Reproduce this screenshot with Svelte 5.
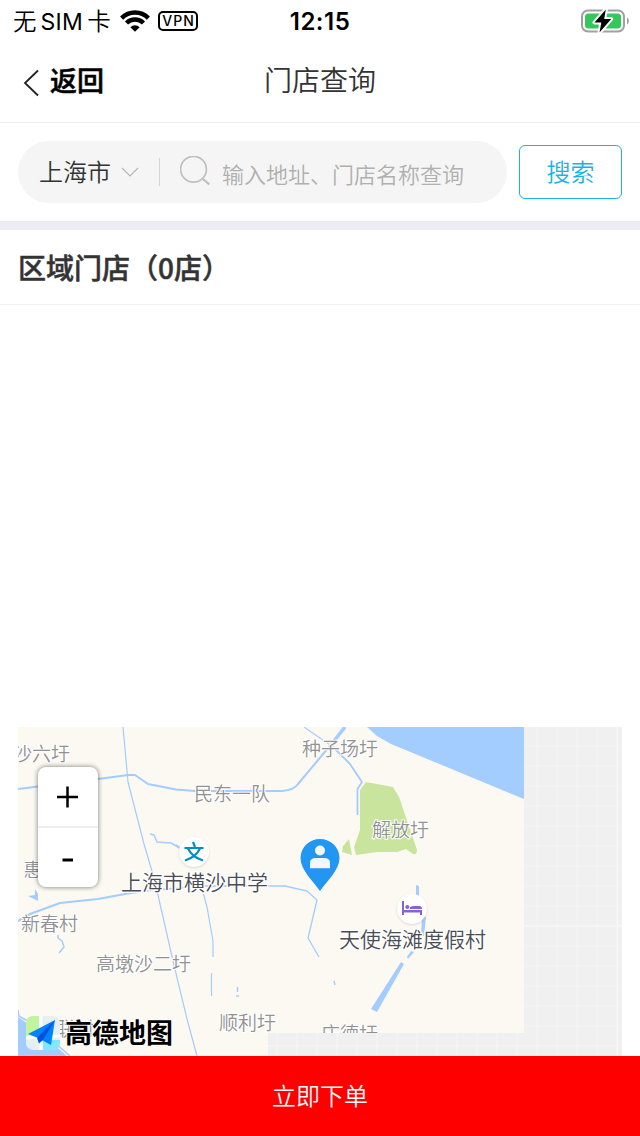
<script>
  const villages = [
    { name: '沙六圩', x: 13, y: 760.5 },
    { name: '种子场圩', x: 302, y: 755.5 },
    { name: '民东一队', x: 194, y: 800.5 },
    { name: '解放圩', x: 372, y: 836.5 },
    { name: '惠', x: 23.5, y: 876.5 },
    { name: '新春村', x: 21, y: 930.5 },
    { name: '高墩沙二圩', x: 96, y: 970.5 },
    { name: '顺利圩', x: 219, y: 1029.5 },
    { name: '庄德圩', x: 321, y: 1040.5 },
    { name: '联村', x: 56, y: 1035.5 },
  ];
  const gridColumns = Array.from({ length: 18 }, (_, i) => 277 + i * 20);
  const gridRows = Array.from({ length: 16 }, (_, i) => 746 + i * 20);
</script>

<div class="screen">
  <div class="status">
    <div class="carrier">
      <span class="sim"><span>无</span><span class="latin">SIM</span><span>卡</span></span>
      <svg class="wifi" width="30" height="22" viewBox="0 0 30 22">
        <g fill="none" stroke="#000" stroke-width="4.4">
          <path d="M1.6 8.1a19 19 0 0 1 26.8 0" />
          <path d="M6.5 13a12.1 12.1 0 0 1 17 0" />
        </g>
        <path d="M15 21.800l-4.600-4.600a6.600 6.600 0 0 1 9.200 0z" />
      </svg>
      <span class="vpn">VPN</span>
    </div>
    <time>12:15</time>
    <svg class="battery" width="48" height="24" viewBox="0 0 48 24">
      <rect x="1" y="1.5" width="42" height="21" rx="6" fill="none" stroke="#a0a0a2" stroke-width="2" />
      <path d="M46 8.5c2.500 1.200 2.500 5.800 0 7z" fill="#a0a0a2" />
      <rect x="4" y="4.500" width="36" height="15" rx="3.500" fill="#34c759" />
      <path d="M24.800.5L13.500 13.500h6.800L18.500 23.500 30.200 10h-7z" fill="#000" stroke="#fff" stroke-width="4" paint-order="stroke" stroke-linejoin="round" />
    </svg>
  </div>

  <header>
    <button class="back">
      <svg width="18" height="28" viewBox="0 0 18 28"><path d="M16 1.500L3 14 16 26.500" fill="none" stroke="#222" stroke-width="1.800" /></svg>
      <span>返回</span>
    </button>
    <h1>门店查询</h1>
  </header>

  <section class="search">
    <div class="field">
      <span class="city">上海市</span>
      <svg class="chevron" width="18" height="10" viewBox="0 0 18 10"><path d="M1 1l8 8 8-8" fill="none" stroke="#b5b5b5" stroke-width="1.100" /></svg>
      <i></i>
      <svg class="lens" width="32" height="32" viewBox="0 0 32 32"><g fill="none" stroke="#bfbfbf" stroke-width="1.700"><circle cx="13.500" cy="13.300" r="12.900" /><path d="M22.300 22.500l7 5.900" stroke-width="2.200" /></g></svg>
      <span class="hint">输入地址、门店名称查询</span>
    </div>
    <button class="go">搜索</button>
  </section>

  <h2>区域门店（0店）</h2>
  <main></main>

  <div class="map">
    <svg width="604" height="329" viewBox="18 727 604 329">
      <rect x="18" y="727" width="604" height="329" fill="#f0f0f0" />
      <g fill="none" stroke="#f3f3f3" stroke-width="1.600">
        {#each gridColumns as x}<path d="M{x} 727V1056" />{/each}
        {#each gridRows as y}<path d="M268 {y}H622" />{/each}
      </g>
      <path d="M417.500 727V1056M617.500 727V1056M268 926H622" stroke="#f6f6f6" stroke-width="2" />
      <path d="M18 727H524V1033H268V1056H18Z" fill="#fcf9f2" />

      <g fill="#a3ccff">
        <path d="M367 727H524V799L391 744 377 736Z" />
        <path d="M18 1017L37 1030 67 1056H18Z" />
        <path d="M28 896l7-1V889l3 5v6l1 1-3-1z" />
        <path d="M401 962l3 2-27 48-6-3z" />
        <path d="M416 885l3 1v10h-3zM422 916l4 1-2 19-3 0zM411 951l3 1-6 7-1-2z" />
      </g>
      <g fill="#c9e59d">
        <path d="M366 782l27 5 6 10 18 53q0 5-4 4l-7-5-9 3h-20l-21 3-2-8 6-17V790z" />
        <path d="M349 839l3 16-10-3 1-6z" />
      </g>
      <g fill="none" stroke="#a3ccff" stroke-linejoin="round">
        <path stroke-width="2" d="M18 789L98 779 128 775H135L148 784 176 789.500 195 791H282Q294 790 298 784L334 741" />
        <path stroke-width="3.500" d="M334 741L345 727" />
        <path stroke-width="1.200" d="M123 727L128 782 144 844 154 878 158 895 173 961 187 1019 197 1056" />
        <path stroke-width="1.500" d="M150 834l4 1 3 7 14 1 9 5" />
        <path stroke-width="2" d="M176 845l5 4" />
        <path stroke-width="2.200" d="M18 921L30 914 60 903 98 899 125 894 145 891" />
        <path stroke-width="1.300" d="M145 891L200 886H285L307 891 317 900 308 938 319 957" />
        <path stroke-width="1.200" d="M201 885L207 907 213 941V957M211.500 973V996" />
        <path stroke-width="1.100" d="M304 727L333 747" />
        <path stroke-width="1.800" d="M333 747L350 764 362 782 357.500 789V815" />
        <path stroke-width="1.500" d="M58 935v3l4 3 2 6-5 6M237.500 987v5M236 996h3M334 981l1 4" />
        <path stroke-width="1.500" d="M18 1010l1 6 17 10 34 30" />
      </g>

      <g class="village">
        {#each villages as v}<text x={v.x} y={v.y}>{v.name}</text>{/each}
      </g>
      <path d="M268 1033H524V1056H268Z" fill="#f0f0f0" />
      <path d="M277 1033v23M297 1033v23M317 1033v23M337 1033v23M357 1033v23M377 1033v23M397 1033v23M417 1033v23M437 1033v23M457 1033v23M477 1033v23M497 1033v23M517 1033v23M268 1046H524" stroke="#f4f4f4" stroke-width="1.600" />

      <g class="poi">
        <circle cx="194" cy="852" r="15" />
        <circle cx="412" cy="909" r="15" />
      </g>
      <path d="M193 842l2 5M184.500 848h19M188 848.500q4 8.500 15 12M200 848.500q-4 8.500-15 12" fill="none" stroke="#0090c8" stroke-width="2.200" />
      <path d="M402 901h2v9h18v5h-2v-2.500h-16v2.500h-2zM410 909v-2l3-1h6q3 0 3 3z" fill="#8761db" />
      <circle cx="407.300" cy="907" r="2.100" fill="#8761db" />
      <g class="place">
        <text x="121" y="890">上海市横沙中学</text>
        <text x="339" y="947">天使海滩度假村</text>
      </g>

      <path d="M320 891C313 881 300.500 870 300.500 858A19.500 19 0 0 1 339.500 858C339.500 870 327 881 320 891Z" fill="#2196f3" />
      <circle cx="320" cy="850.500" r="5" fill="#f3f7fc" />
      <path d="M310 868.300V863q0-5 6-5h8q6 0 6 5v5.300z" fill="#f3f7fc" />

      <clipPath id="badge"><rect x="26" y="1016" width="34" height="34" rx="7" /></clipPath>
      <g clip-path="url(#badge)">
        <path d="M26 1016H60V1050H26Z" fill="#e6f0f2" />
        <path d="M26 1016H39V1031L26 1036Z" fill="#c2f49c" />
        <path d="M43 1040H60V1050H43Z" fill="#83e5ff" />
        <path d="M41 1016V1050M26 1038L60 1036" stroke="#fff" stroke-width="3" />
      </g>
      <path d="M55 1020L28 1034 38 1038 51 1045Z" fill="#0083ff" />
      <path d="M55 1020L37 1038 39 1043.500 43 1040Z" fill="#0052d9" />
      <text class="brand" x="65" y="1043" textLength="108" lengthAdjust="spacing">高德地图</text>
    </svg>
    <div class="zoom">
      <button aria-label="+"><svg width="22" height="22" viewBox="0 0 22 22"><path d="M10.500.5v21M0 11h21" stroke="#000" stroke-width="2.500" /></svg></button>
      <button aria-label="-"><svg width="22" height="22" viewBox="0 0 22 22"><path d="M5.500 13h10.500" stroke="#000" stroke-width="3" /></svg></button>
    </div>
  </div>
  <button class="order">立即下单</button>
</div>

<style>
  :global(body) { margin: 0; background: #fff; }
  .screen {
    width: 640px; height: 1136px; overflow: hidden; display: flex; flex-direction: column;
    background: #fff; color: #333; font-family: "Noto Sans CJK SC", sans-serif;
  }
  button { border: 0; padding: 0; margin: 0; background: none; font: inherit; color: inherit; }
  svg { display: block; flex: none; }
  h1, h2 { margin: 0; }
  .status { height: 40px; display: grid; grid-template-columns: 1fr auto 1fr; align-items: center; color: #000; flex: none; }
  .carrier { display: flex; align-items: center; padding-left: 13px; }
  .sim { display: flex; align-items: center; gap: 4px; font: 350 23.500px/40px Inter, "Noto Sans CJK SC", sans-serif; width: 107px; padding-top: 2px; }
  .latin { font-weight: 400; font-size: 23px; letter-spacing: .3px; }
  .vpn { margin-left: 8px; box-sizing: border-box; width: 40px; height: 20px; border: 2px solid #000; border-radius: 5px; font: 500 14px/16px Inter, sans-serif; letter-spacing: 1px; text-align: center; padding-left: 1px; }
  time { font: 600 24px/40px Inter, sans-serif; letter-spacing: .5px; padding-top: 2px; }
  .battery { justify-self: end; margin-right: 11px; }
  header { height: 82px; border-bottom: 1px solid #efefef; display: grid; grid-template-columns: 1fr auto 1fr; align-items: center; flex: none; }
  .back { display: flex; align-items: center; padding-left: 22px; gap: 10px; font-weight: 500; font-size: 27px; line-height: 40px; color: #000; -webkit-text-stroke: .5px #000; }
  .back svg { margin-top: 3px; }
  .back span { margin-top: -2px; }
  h1 { font-weight: 350; font-size: 28px; line-height: 40px; margin-top: -4px; }
  .search { height: 98px; border-bottom: 9px solid #ecedf3; padding: 0 18px; display: flex; align-items: center; gap: 12px; flex: none; }
  .field { width: 489px; height: 62px; border-radius: 31px; background: #f5f5f5; display: flex; align-items: center; box-sizing: border-box; padding-left: 21px; }
  .city { font-size: 24px; line-height: 36px; font-weight: 350; width: 82px; margin-top: -3px; }
  .field i { width: 1px; height: 28px; background: #d5d5d5; margin: 0 20px; }
  .hint { margin: 1px 0 0 10px; font-size: 22px; line-height: 36px; font-weight: 350; color: #b0b0b0; white-space: nowrap; }
  .go { width: 103px; height: 54px; border: 1px solid #1cb2e6; border-radius: 6px; color: #1cb2e6; font-size: 24px; line-height: 48px; font-weight: 350; padding-bottom: 3px; }
  h2 { height: 74px; border-bottom: 1px solid #f1f1f1; padding-left: 18px; font-size: 28px; line-height: 75px; font-weight: 500; -webkit-text-stroke: .5px #333; flex: none; }
  main { flex: 1; }
  .map { position: relative; margin: 0 18px; height: 329px; flex: none; }
  .village text { font-size: 19px; font-weight: 350; fill: #929292; stroke: #fff; stroke-width: 2px; paint-order: stroke; }
  .place text { font-size: 21px; font-weight: 350; fill: #4b4d55; stroke: #fff; stroke-width: 2.500px; paint-order: stroke; }
  .poi { fill: #fff; filter: drop-shadow(0 1px 1px #0002); }
  .brand { font-size: 27px; font-weight: 700; fill: #000; stroke: #fff; stroke-width: 1.500px; paint-order: stroke; }
  .zoom { position: absolute; left: 20px; top: 40px; width: 60px; height: 120px; background: #fff; border-radius: 8px; box-shadow: 0 0 5px #0008; display: flex; flex-direction: column; }
  .zoom button { flex: 1; display: grid; place-items: center; }
  .zoom button:first-child { border-bottom: 2px solid #eee; }
  .order { height: 80px; background: #f00; color: #fff; font-size: 24px; font-weight: 350; line-height: 76px; padding-bottom: 3px; flex: none; }
</style>
